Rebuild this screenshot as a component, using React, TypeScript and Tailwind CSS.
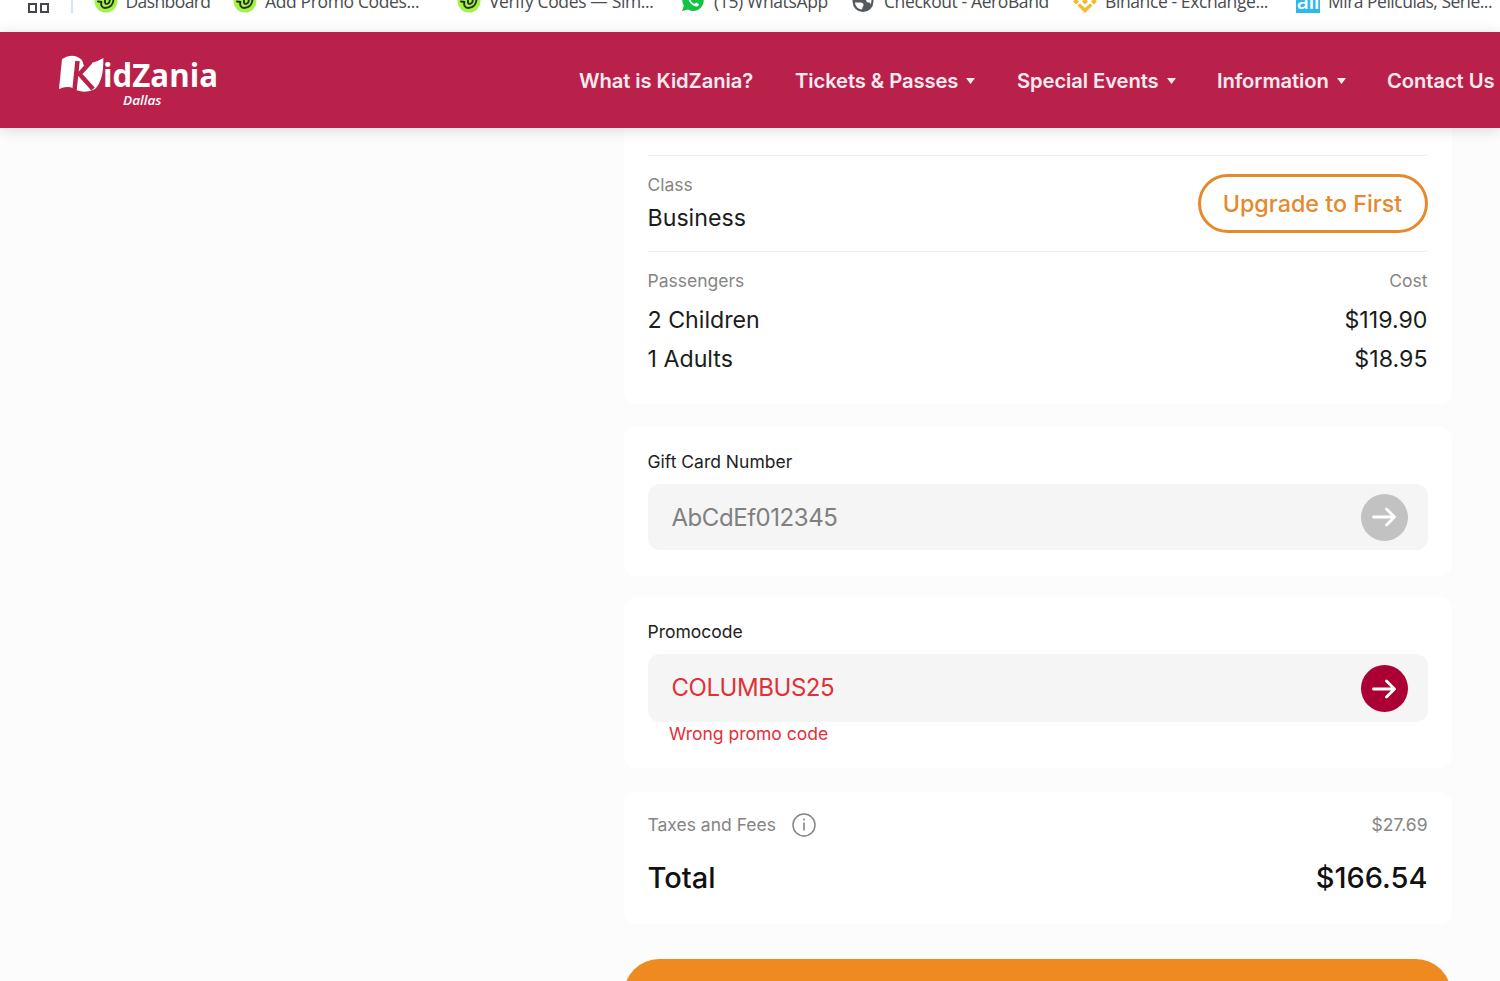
import type { ReactNode } from "react";

const LimeIcon = () => (
  <svg width="24" height="24" viewBox="0 0 24 24">
    <circle cx="12" cy="12" r="11.5" fill="#a6f04b" />
    <path
      d="M4 12.500l3.500.5c-1 3 .5 6 3.500 6 5 0 8.500-3.500 8.500-9M11 11.500c-.5 3 1 4 3 3s2-3 1.500-5"
      fill="none"
      stroke="#20330f"
      strokeWidth="1.900"
      strokeLinecap="round"
      strokeLinejoin="round"
    />
  </svg>
);

const WhatsAppIcon = () => (
  <svg width="22" height="24" viewBox="0 0 22 24">
    <path d="M11 1a10.500 10.500 0 1 1-5 19.600L0 22l1.800-5.200A10.500 10.500 0 0 1 11 1z" fill="#14c244" />
    <path d="M6 8c0 5 5 9.500 9 9.500 1.500-.5 2-1.500 2-2.500l-3-1.500-1.500 1.500c-2-.8-3.500-2.300-4-4L9.500 9z" fill="#fff" />
  </svg>
);

const GlobeIcon = () => (
  <svg width="22" height="24" viewBox="0 0 22 24">
    <circle cx="11" cy="12.5" r="10.500" fill="#55585d" />
    <path d="M3 13.500h6c1.500 0 2.500 1 2.500 2.500s-1 1.500-1 2.500-.5 2-1.500 2c-3.500-1-6-4-6-7z" fill="#fff" />
    <path d="M10 10h4c0 3 1 3.500 3 3.500 1 0 1.500 1 1 2.500 2-3 1.500-5 1-7l-6-1z" fill="#fff" />
  </svg>
);

const BinanceIcon = () => (
  <svg width="24" height="24" viewBox="0 0 24 24" fill="#f3ba2f">
    <path d="M12 9.500l3 3-3 3-3-3zM3 9.500l3 3-3 3-3-3zM21 9.500l3 3-3 3-3-3z" />
    <path d="M4.500 16.500L7 14.500l5 4.500 5-4.500 2.500 2L12 24z" />
  </svg>
);

const AllIcon = () => (
  <span className="flex h-6 w-6 items-end justify-center bg-[#2fb8ea] font-['Open_Sans',sans-serif] text-[21px] leading-6 font-semibold text-white">
    all
  </span>
);

const bookmarks: { label: string; icon: ReactNode; box: string }[] = [
  { label: "Dashboard", icon: <LimeIcon />, box: "w-[139.500px] tracking-[-0.6px]" },
  { label: "Add Promo Codes...", icon: <LimeIcon />, box: "w-[224px] tracking-[-0.36px]" },
  { label: "Verify Codes — Sim...", icon: <LimeIcon />, box: "w-[225px] tracking-[-0.36px]" },
  { label: "(15) WhatsApp", icon: <WhatsAppIcon />, box: "w-[170px] tracking-[-0.36px]" },
  { label: "Checkout - AeroBand", icon: <GlobeIcon />, box: "w-[221px] tracking-[-0.4px]" },
  { label: "Binance - Exchange...", icon: <BinanceIcon />, box: "w-[223px] tracking-[-0.4px]" },
  { label: "Mira Películas, Serie...", icon: <AllIcon />, box: "w-[204px] tracking-[-0.5px]" },
];

const navItems = [
  { label: "What is KidZania?", menu: false, box: "w-[216px]" },
  { label: "Tickets & Passes", menu: true, box: "w-[222px]" },
  { label: "Special Events", menu: true, box: "w-[200px]" },
  { label: "Information", menu: true, box: "w-[170px]" },
  { label: "Contact Us", menu: false, box: "w-[113px]" },
];

function BookmarksBar() {
  return (
    <div className="flex h-8 items-start overflow-hidden bg-white">
      <div className="mt-[3px] ml-7 flex gap-[3px]">
        <span className="h-[9.500px] w-[9px] border-2 border-[#45474a]" />
        <span className="h-[9.500px] w-[9px] border-2 border-[#45474a]" />
      </div>
      <div className="mr-[21px] ml-[22px] h-[13px] w-[2px] bg-[#d3e3fd]" />
      {bookmarks.map((b) => (
        <div key={b.label} className={`-mt-[11px] flex shrink-0 items-center ${b.box}`}>
          <span className="flex w-8 shrink-0">{b.icon}</span>
          <span className="font-['Open_Sans',sans-serif] text-[17.500px] leading-6 whitespace-nowrap text-[#4a4c50]">
            {b.label}
          </span>
        </div>
      ))}
    </div>
  );
}

function Logo() {
  return (
    <svg width="170" height="60" viewBox="0 0 170 60" fill="#fff">
      <path d="M5 39L8 9Q19 2 28 10L30 16L36 13.500Q43 12 49.300 8Q50 30 41 39Q32 44 22 40L16.700 37.300Q11 36 5 39z" />
      <path d="M23.500 11L20.500 40M36.500 12L25.500 24L39 39" fill="none" stroke="#b9214b" strokeWidth="4.500" />
      <text
        x="49"
        y="37"
        textLength="115"
        lengthAdjust="spacingAndGlyphs"
        className="font-['Open_Sans',sans-serif] text-[32px] font-bold"
      >
        idZania
      </text>
      <text
        x="69"
        y="55"
        textLength="38.500"
        lengthAdjust="spacingAndGlyphs"
        className="font-['Open_Sans',sans-serif] text-[13px] font-semibold italic"
      >
        Dallas
      </text>
    </svg>
  );
}

function Header() {
  return (
    <header className="relative z-10 flex h-24 items-center bg-[#b9214b] shadow-[0_2px_14px_rgba(0,0,0,0.14)]">
      <div className="ml-[54px] w-[525px] shrink-0">
        <Logo />
      </div>
      <nav className="flex shrink-0 pt-0.5">
        {navItems.map((item) => (
          <a
            key={item.label}
            className={`flex shrink-0 items-center gap-2 text-[20.200px] font-semibold tracking-[-0.08px] whitespace-nowrap text-[#fdeaf0] ${item.box}`}
          >
            {item.label}
            {item.menu && (
              <svg width="9" height="6" viewBox="0 0 9 6" fill="currentColor">
                <path d="M0 0h9L4.500 6z" />
              </svg>
            )}
          </a>
        ))}
      </nav>
    </header>
  );
}

type CodeFieldProps = {
  label: string;
  value: string;
  active?: boolean;
  error?: string;
};

function CodeField({ label, value, active, error }: CodeFieldProps) {
  return (
    <>
      <label className="block pt-px text-[17.500px] leading-6 text-[#222]">{label}</label>
      <div
        className={`mt-[10px] flex items-center justify-between rounded-xl bg-[#f5f5f5] pr-5 pl-6 ${active ? "h-17" : "h-[66px]"}`}
      >
        <span className={`text-[24px] tracking-[-0.45px] ${active ? "text-[#e2303a]" : "pt-0.5 text-[#808080]"}`}>{value}</span>
        <button
          className={`flex size-[47px] items-center justify-center rounded-full ${active ? "mt-px bg-[#ab0034]" : "bg-[#c2c2c2]"}`}
        >
          <svg width="24" height="20" viewBox="0 0 24 20" fill="none" stroke="#fff" strokeWidth="2.800" strokeLinecap="round" strokeLinejoin="round">
            <path d="M1.500 10H22.500M14.500 2l8 8-8 8" />
          </svg>
        </button>
      </div>
      {error && <p className="pl-[21.500px] text-[17.500px] leading-6 text-[#e2303a]">{error}</p>}
    </>
  );
}

export default function App() {
  return (
    <div className="h-[981px] w-[1500px] overflow-hidden bg-[#fcfcfc] font-[Inter,sans-serif]">
      <BookmarksBar />
      <Header />

      <main className="ml-[624px] w-[828px]">
        <section className="h-[276px] rounded-b-xl bg-white pt-[27px] pr-[24.500px] pl-[23.500px]">
          <div className="flex h-24 items-start justify-between border-t border-[#f0f0f0]">
            <div>
              <p className="mt-[17px] text-[17.500px] leading-6 text-[#858585]">Class</p>
              <p className="mt-[5px] text-[23.200px] leading-8 text-[#1c1c1c]">Business</p>
            </div>
            <button className="mt-[18px] h-[59px] w-[230px] rounded-full border-3 border-[#e58a2c] pt-px text-[23.300px] font-medium whitespace-nowrap text-[#e58a2c]">
              Upgrade to First
            </button>
          </div>
          <div className="border-t border-[#f0f0f0] pt-[17px]">
            <div className="flex justify-between text-[17.500px] leading-6 text-[#858585]">
              <span>Passengers</span>
              <span>Cost</span>
            </div>
            <div className="mt-2 flex justify-between text-[23.200px] leading-[39px] text-[#1c1c1c]">
              <span>2 Children</span>
              <span>$119.90</span>
            </div>
            <div className="flex justify-between text-[23.200px] leading-[39px] text-[#1c1c1c]">
              <span>1 Adults</span>
              <span>$18.95</span>
            </div>
          </div>
        </section>

        <section className="mt-[23px] h-[149px] rounded-xl bg-white pt-[22px] pr-[24.500px] pl-[23.500px]">
          <CodeField label="Gift Card Number" value="AbCdEf012345" />
        </section>

        <section className="mt-[21px] h-[171px] rounded-xl bg-white pt-[22px] pr-[24.500px] pl-[23.500px]">
          <CodeField label="Promocode" value="COLUMBUS25" active error="Wrong promo code" />
        </section>

        <section className="mt-6 h-[132px] rounded-xl bg-white pt-[21px] pr-[24.500px] pl-[23.500px]">
          <div className="flex items-center justify-between text-[17.500px] leading-6 text-[#858585]">
            <span className="flex items-center gap-4">
              Taxes and Fees
              <svg width="24" height="24" viewBox="0 0 24 24" fill="none" stroke="#858585">
                <circle cx="12" cy="12" r="11" strokeWidth="1.500" />
                <path d="M12 9.500v8M12 5.500v2" strokeWidth="1.600" />
              </svg>
            </span>
            <span>$27.69</span>
          </div>
          <div className="mt-[21px] flex justify-between text-[29px] leading-10 font-medium text-[#111]">
            <span>Total</span>
            <span>$166.54</span>
          </div>
        </section>

        <button className="mt-[35px] block h-[70px] w-[827px] rounded-full bg-[#ef8a20]" />
      </main>
    </div>
  );
}
